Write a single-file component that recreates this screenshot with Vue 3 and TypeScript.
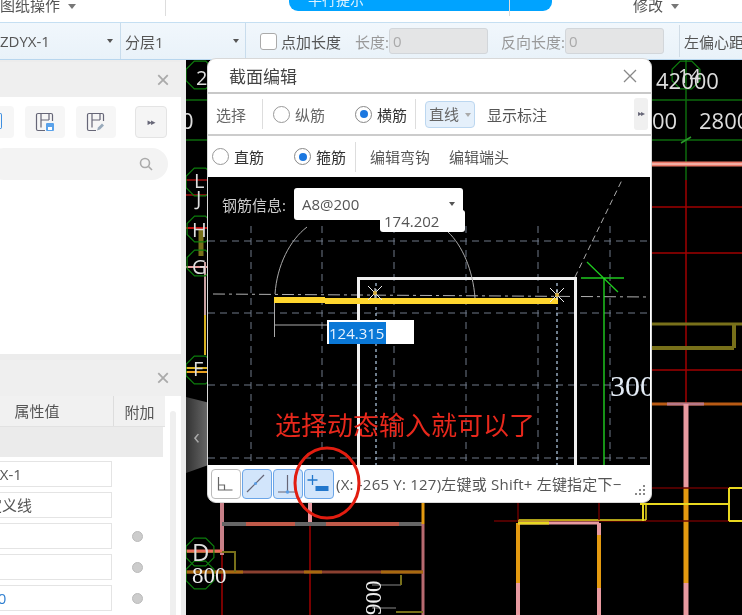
<template>
  <div class="app">
    <div class="menubar">
      <span class="menu-item first">图纸操作<i class="tri"></i></span>
      <span class="menu-sep"></span>
      <div class="notice">平行提示</div>
      <span class="menu-sep second"></span>
      <span class="menu-item last">修改<i class="tri"></i></span>
    </div>

    <div class="toolbar">
      <div class="combo combo-a">ZDYX-1<i class="tri small"></i></div>
      <div class="combo combo-b">分层1<i class="tri small"></i></div>
      <label class="check"><span class="box"></span>点加长度</label>
      <span class="lbl lbl-a">长度:</span>
      <div class="num">0</div>
      <span class="lbl lbl-b">反向长度:</span>
      <div class="num">0</div>
      <span class="tb-sep"></span>
      <span class="lbl lbl-c">左偏心距</span>
    </div>

    <div class="main">
      <aside class="side">
        <section class="panel panel-top">
          <div class="panel-head"><span class="close">×</span></div>
          <div class="icon-row">
            <div class="icon-btn cut">
              <span class="cut-mark"></span>
            </div>
            <div class="icon-btn">
              <svg width="20" height="20" viewBox="0 0 20 20">
                <path d="M10 18.500H3a1.500 1.500 0 0 1-1.500-1.500V3A1.500 1.500 0 0 1 3 1.500h13A1.500 1.500 0 0 1 17.500 3v6M6 1.500v14M6 8h8M14 1.500V8" fill="none" stroke="#667" stroke-width="1.200" />
                <rect x="11" y="11" width="8" height="8" rx="1" fill="#5aa2ea" />
                <rect x="13" y="15" width="4" height="3" fill="#fff" />
              </svg>
            </div>
            <div class="icon-btn">
              <svg width="20" height="20" viewBox="0 0 20 20">
                <path d="M10 18.500H3a1.500 1.500 0 0 1-1.500-1.500V3A1.500 1.500 0 0 1 3 1.500h13A1.500 1.500 0 0 1 17.500 3v6M6 1.500v14M6 8h8M14 1.500V8" fill="none" stroke="#667" stroke-width="1.200" />
                <path d="M11 18.500l1-3 4-4 2 2-4 4z" fill="#9ab" />
              </svg>
            </div>
            <div class="more-btn">▸▸</div>
          </div>
          <div class="search">
            <svg width="14" height="14" viewBox="0 0 14 14">
              <circle cx="6" cy="6" r="4.500" fill="none" stroke="#aaa" stroke-width="1.600" />
              <path d="M9.500 9.500L13 13" stroke="#aaa" stroke-width="1.600" />
            </svg>
          </div>
        </section>

        <section class="panel panel-bottom">
          <div class="panel-head"><span class="close">×</span></div>
          <div class="prop-wrap">
            <div class="prop-table">
              <div class="prop-header">
                <span class="col-val">属性值</span>
                <span class="col-add">附加</span>
              </div>
              <div class="prop-group"></div>
              <div v-for="(row, i) in propRows" :key="i" class="prop-row">
                <div class="prop-input" :class="{ blue: row.blue }">{{ row.text }}</div>
                <span v-if="row.dot" class="dot"></span>
              </div>
            </div>
            <div class="scroll-track"></div>
          </div>
        </section>
      </aside>

      <div class="canvas">
        <svg class="cad" width="556" height="555" viewBox="186 60 556 555">
          <line
            v-for="(l, i) in bgLines"
            :key="i"
            :x1="l[0]"
            :y1="l[1]"
            :x2="l[2]"
            :y2="l[3]"
            :stroke="l[4]"
            :stroke-width="l[5]"
          />
          <polygon v-for="(p, i) in bubbles" :key="'b' + i" :points="hex(p[0], p[1], p[2])" fill="none" stroke="#0d7d0d" stroke-width="1.200" />
          <text x="656" y="89" class="dim">42000</text>
          <text x="652" y="129" class="dim">00</text>
          <text x="699" y="129" class="dim">2800</text>
          <text x="678" y="83" class="axis">14</text>
          <text x="196" y="85" class="axis">2</text>
          <text x="181" y="129" class="dim">0</text>
          <text x="194" y="188" class="axis">L</text>
          <text x="196" y="205" class="axis">J</text>
          <text x="192" y="237" class="axis">H</text>
          <text x="192" y="274" class="axis">G</text>
          <text x="193" y="376" class="axis">F</text>
          <text x="192" y="561" class="axis big">D</text>
          <text x="192" y="583" class="num-serif">800</text>
          <text transform="translate(381 615) rotate(-90)" class="num-serif">900</text>
        </svg>
        <div class="collapse"><span>‹</span></div>
      </div>
    </div>

    <div class="dialog">
      <div class="dlg-title">
        <span>截面编辑</span>
        <svg width="16" height="16" viewBox="0 0 16 16"><path d="M2 2l12 12M14 2L2 14" stroke="#888" stroke-width="1.300" /></svg>
      </div>
      <div class="dlg-row row-a">
        <span class="t-select">选择</span>
        <span class="v-sep"></span>
        <span class="radio r1"></span><span class="r-text">纵筋</span>
        <span class="radio on r2"></span><span class="r-text strong">横筋</span>
        <span class="v-sep s2"></span>
        <div class="line-btn">直线<i class="tri tiny"></i></div>
        <span class="t-show">显示标注</span>
        <div class="dlg-more">▸▸</div>
      </div>
      <div class="dlg-row row-b">
        <span class="radio r3"></span><span class="r-text strong">直筋</span>
        <span class="radio on r4"></span><span class="r-text strong">箍筋</span>
        <span class="v-sep s3"></span>
        <span class="t-edit">编辑弯钩</span>
        <span class="t-edit e2">编辑端头</span>
      </div>
      <div class="dlg-canvas">
        <svg width="442" height="288" viewBox="208 177 442 288">
          <line v-for="y in gridY" :key="'y' + y" x1="208" :y1="y" x2="650" :y2="y" class="grid" />
          <line v-for="x in gridX" :key="'x' + x" :x1="x" y1="226" :x2="x" y2="465" class="grid" />
          <line x1="376" y1="277" x2="376" y2="465" class="axis-dot" />
          <line x1="557" y1="277" x2="557" y2="465" class="axis-dot" />
          <line x1="213" y1="294" x2="650" y2="297" class="center" />
          <path d="M358.500 465V278.500H575.500V465" fill="none" stroke="#f0f0f0" stroke-width="3" />
          <path d="M575 277L622 180" class="diag" />
          <path d="M275 294C277 265 290 240 307 227M448 232C462 245 473 270 475 298M274.500 300V337M274 325H328" fill="none" stroke="#aaa" stroke-width="1" />
          <path d="M274 297H325V298H558V304H325V303H274z" fill="#ffd62e" />
          <g v-for="s in stars" :key="s[0]" :transform="`translate(${s[0]} ${s[1]})`">
            <path d="M-7-7L7 7M7-7L-7 7M0-5V5" stroke="#eee" stroke-width="1" />
            <circle r="2" fill="#d8b040" />
          </g>
          <path d="M581 278H624M587 262L618 292" stroke="#1ec81e" stroke-width="1.300" />
          <path d="M604 278V465" stroke="#22e022" stroke-width="1.300" />
          <text x="610" y="396" class="big-300">300</text>
        </svg>
        <div class="steel">
          <span class="steel-label">钢筋信息:</span>
          <div class="steel-box">A8@200<i class="tri small"></i></div>
        </div>
        <div class="angle-tag">174.202</div>
        <div class="len-input"><span>124.315</span></div>
      </div>
      <div class="dlg-foot">
        <button class="tool plain">
          <svg width="24" height="24" viewBox="0 0 24 24"><path d="M4.500 5V18H18.500M4.500 13H10.500V18" fill="none" stroke="#666" stroke-width="1.200" /></svg>
        </button>
        <button class="tool active">
          <svg width="24" height="24" viewBox="0 0 24 24"><path d="M2 20L19 3" stroke="#667" stroke-width="1.200" /><circle cx="10.500" cy="11.500" r="1.500" fill="#5a9ee6" /></svg>
        </button>
        <button class="tool active">
          <svg width="24" height="24" viewBox="0 0 24 24"><path d="M11.500 3V20M2 20H19" stroke="#667" stroke-width="1.200" /><circle cx="11.500" cy="20" r="1.800" fill="#5a9ee6" /></svg>
        </button>
        <button class="tool active">
          <svg width="24" height="24" viewBox="0 0 24 24"><path d="M5.500 3V13M0.500 8H10.500" stroke="#2277cc" stroke-width="1.300" /><rect x="8.500" y="14" width="13" height="5" fill="#2277cc" /></svg>
        </button>
        <span class="status">(X: -265 Y: 127)左键或 Shift+ 左键指定下−</span>
        <svg class="grip" width="12" height="12" viewBox="0 0 12 12" fill="#888">
          <rect v-for="g in gripDots" :key="g.join()" :x="g[0]" :y="g[1]" width="2" height="2" />
        </svg>
      </div>
    </div>

    <div class="note">选择动态输入就可以了</div>
    <svg class="ring" width="70" height="76" viewBox="0 0 70 76">
      <ellipse cx="35" cy="38" rx="32" ry="35" fill="none" stroke="#e21d10" stroke-width="3" />
    </svg>
  </div>
</template>

<script setup lang="ts">
type Seg = [number, number, number, number, string, number]

const PINK = '#e89aa0'
const ORANGE = '#e49a10'
const RED = '#a00000'
const DARK = '#6a0000'
const YEL = '#e8d820'
const OLIVE = '#78701a'
const GREEN = '#0c6a0c'

const propRows = [
  { text: 'ZDYX-1', dot: false, blue: false },
  { text: '自定义线', dot: false, blue: false },
  { text: '', dot: true, blue: false },
  { text: '', dot: true, blue: false },
  { text: '3000', dot: true, blue: true },
]

const gridX = [251, 322, 394, 466, 538, 610]
const gridY = [241, 313, 385, 458]
const stars = [[375, 293], [557, 295]]
const gripDots = [[8, 0], [4, 4], [8, 4], [0, 8], [4, 8], [8, 8]]

const bubbles = [
  [200, 75, 15], [200, 182, 15], [200, 229, 14], [200, 263, 14], [200, 370, 15],
  [200, 552, 15], [200, 575, 15], [686, 75, 15],
]

const bgLines: Seg[] = [
  // upper right
  [186, 100, 742, 100, GREEN, 1.5],
  [186, 140, 742, 140, GREEN, 1.5],
  [686, 60, 686, 180, GREEN, 1.5],
  [681, 143, 691, 137, '#2a9a2a', 1.5],
  [652, 164, 742, 164, '#e87868', 5],
  [652, 164, 742, 164, '#f6c0b8', 1.5],
  [686, 180, 686, 404, RED, 1.5],
  [652, 207, 742, 207, RED, 1.5],
  [652, 253, 742, 253, RED, 1.5],
  [652, 370, 742, 370, RED, 1.5],
  [652, 324, 742, 324, OLIVE, 3],
  [652, 348, 734, 348, OLIVE, 4],
  [734, 348, 734, 324, OLIVE, 4],
  [652, 404, 742, 404, '#b85a14', 3],
  [667, 404, 704, 404, '#b87888', 3],
  [686, 404, 686, 488, PINK, 5],
  [686, 488, 686, 583, ORANGE, 5],
  [686, 583, 686, 615, PINK, 5],
  [652, 488, 742, 488, DARK, 1.5],
  [494, 521, 742, 521, DARK, 1.5],
  [640, 504, 730, 504, YEL, 2],
  [643, 504, 643, 521, YEL, 2],
  [729, 488, 729, 521, YEL, 2],
  [729, 488, 742, 488, YEL, 2],
  [729, 521, 742, 521, YEL, 2],
  // lower building
  [222, 502, 222, 555, '#c88088', 4],
  [222, 555, 222, 615, RED, 1.5],
  [310, 502, 310, 524, PINK, 4],
  [310, 524, 310, 615, RED, 1.5],
  [222, 524, 423, 524, '#666', 4],
  [246, 524, 295, 524, '#c05a4a', 4],
  [326, 524, 399, 524, '#c05a4a', 4],
  [423, 502, 423, 524, ORANGE, 3],
  [423, 524, 423, 615, '#b86a70', 3],
  [186, 572, 423, 572, '#8a4030', 3],
  [186, 572, 243, 572, '#a86a10', 3],
  [304, 572, 322, 572, '#a86a10', 3],
  [381, 572, 423, 572, '#a86a10', 3],
  [187, 552, 236, 552, OLIVE, 2],
  [235, 552, 235, 572, OLIVE, 2],
  [186, 551, 222, 551, '#e86a5a', 3],
  [372, 585, 401, 585, '#888', 1],
  [401, 585, 401, 575, OLIVE, 2],
  [372, 608, 396, 608, '#888', 1],
  [396, 612, 423, 612, OLIVE, 2],
  // right building
  [518, 523, 518, 583, ORANGE, 4],
  [518, 583, 518, 615, PINK, 4],
  [518, 523, 599, 523, PINK, 3],
  [518, 523, 549, 523, YEL, 3],
  [599, 523, 599, 535, PINK, 4],
  [599, 535, 599, 588, ORANGE, 4],
  [599, 588, 599, 615, PINK, 4],
  [518, 520, 646, 520, YEL, 1.5],
  [646, 504, 646, 520, YEL, 1.5],
  [518, 502, 518, 520, DARK, 1.5],
  [599, 502, 599, 520, DARK, 1.5],
  // left strip
  [186, 180, 207, 180, '#a01010', 1.5],
  [186, 195, 207, 195, '#a01010', 1.5],
  [186, 228, 207, 228, '#c01010', 2],
  [201, 230, 201, 256, OLIVE, 5],
  [186, 267, 207, 267, '#e8a0a0', 2],
  [205, 262, 205, 350, '#c8a0a0', 2],
  [205, 315, 205, 355, '#d8b020', 2],
  [186, 368, 207, 368, '#d8b020', 2],
  [186, 372, 207, 372, '#e8a020', 2],
]

function hex(cx: number, cy: number, r: number): string {
  const pts: string[] = []
  for (let i = 0; i < 8; i++) {
    const a = (Math.PI / 4) * i + Math.PI / 8
    pts.push(`${(cx + r * Math.cos(a)).toFixed(1)},${(cy + r * Math.sin(a)).toFixed(1)}`)
  }
  return pts.join(' ')
}
</script>

<style>
html, body { margin: 0; background: #fff; }
</style>

<style scoped>
.app {
  position: relative;
  width: 742px;
  height: 615px;
  overflow: hidden;
  background: #fff;
  color: #555;
  font-family: 'Open Sans', 'Noto Sans CJK SC', sans-serif;
  font-size: 15px;
  filter: blur(0.4px);
}
.tri {
  display: inline-block;
  width: 0;
  height: 0;
  border-left: 4px solid transparent;
  border-right: 4px solid transparent;
  border-top: 5px solid #777;
  vertical-align: middle;
  margin-left: 8px;
}
.tri.small { border-left-width: 3px; border-right-width: 3px; border-top-width: 4px; border-top-color: #555; margin-left: 0; }
.tri.tiny { border-left-width: 3px; border-right-width: 3px; border-top-width: 4px; border-top-color: #aaa; margin-left: 6px; }

/* top strip */
.menubar {
  height: 22px;
  display: flex;
  align-items: flex-start;
  overflow: hidden;
}
.menu-item { line-height: 14px; margin-top: -2px; white-space: nowrap; }
.menu-item.first { width: 165px; flex: none; }
.menu-item.last { margin-left: 123px; }
.menu-sep { width: 1px; height: 16px; background: #ddd; flex: none; }
.menu-sep.second { margin-left: -43px; }
.notice {
  margin-left: 123px;
  width: 263px;
  height: 11px;
  flex: none;
  box-sizing: border-box;
  padding-left: 19px;
  background: #00a3ff;
  border-radius: 0 0 9px 9px;
  color: #dff3ff;
  font-size: 14px;
  line-height: 0;
  overflow: hidden;
}

.toolbar {
  height: 38px;
  box-sizing: border-box;
  border-top: 1px solid #c5dff2;
  border-bottom: 1px solid #b8d6ee;
  background: linear-gradient(#f1f7fc, #e9f2f9);
  display: flex;
  align-items: center;
  white-space: nowrap;
  overflow: hidden;
}
.combo {
  height: 100%;
  box-sizing: border-box;
  flex: none;
  display: flex;
  align-items: center;
  justify-content: space-between;
  border-right: 1px solid #c8dcec;
}
.combo-a { width: 121px; padding-right: 7px; }
.combo-b { width: 125px; padding: 0 6px 0 4px; }
.check { display: flex; align-items: center; margin-left: 14px; width: 95px; flex: none; }
.box {
  width: 15px;
  height: 15px;
  border: 1px solid #aaa;
  border-radius: 3px;
  background: #fff;
  margin-right: 4px;
}
.lbl { color: #999; flex: none; }
.lbl-a { width: 34px; }
.lbl-b { width: 64px; margin-left: 13px; }
.lbl-c { color: #555; margin-left: 4px; }
.num {
  width: 99px;
  height: 26px;
  flex: none;
  box-sizing: border-box;
  border: 1px solid #d2d6da;
  border-radius: 3px;
  background: #e4e5e6;
  padding-left: 3px;
  line-height: 24px;
  color: #aaa;
}
.tb-sep { width: 1px; height: 32px; background: #d0dce6; margin-left: 15px; flex: none; }

/* main area */
.main { display: flex; height: 555px; }
.side {
  width: 186px;
  flex: none;
  background: #ececec;
  display: flex;
  flex-direction: column;
  gap: 6px;
  overflow: hidden;
}
.panel { width: 181px; background: #fff; overflow: hidden; position: relative; }
.panel-top { height: 292px; margin-top: 2px; flex: none; }
.panel-bottom { flex: 1; }
.panel-head {
  height: 36px;
  background: #efefef;
  display: flex;
  align-items: center;
  justify-content: flex-end;
  padding-right: 11px;
}
.panel-top .panel-head { height: 35px; }
.close { color: #aaa; font-size: 24px; line-height: 1; font-family: 'Liberation Sans', sans-serif; }
.icon-row { display: flex; align-items: center; margin: 9px 0 0 -26px; gap: 11px; }
.icon-btn {
  width: 40px;
  height: 32px;
  flex: none;
  border-radius: 4px;
  background: #f6f6f6;
  display: flex;
  align-items: center;
  justify-content: center;
}
.cut { position: relative; }
.cut-mark {
  position: absolute;
  left: 25px;
  top: 7px;
  width: 2px;
  height: 14px;
  border: 1px solid #3f8fe0;
  border-left: 0;
  border-radius: 0 2px 2px 0;
}
.more-btn {
  width: 30px;
  height: 30px;
  margin-left: 8px;
  flex: none;
  border: 1px solid #e4e4e4;
  border-radius: 4px;
  background: #f5f5f5;
  color: #667;
  font-size: 9px;
  letter-spacing: -1px;
  text-align: center;
  line-height: 30px;
  font-family: 'DejaVu Sans', sans-serif;
}
.search {
  height: 32px;
  width: 180px;
  margin: 10px 0 0 -12px;
  background: #f3f3f3;
  border-radius: 16px;
  display: flex;
  align-items: center;
  justify-content: flex-end;
  padding-right: 15px;
  box-sizing: border-box;
}
.prop-wrap { display: flex; height: 100%; }
.prop-table { width: 165px; flex: none; margin-right: 5px; }
.prop-header {
  height: 31px;
  display: flex;
  align-items: center;
  background: #f1f1f1;
  border-bottom: 1px solid #e2e2e2;
  box-sizing: border-box;
}
.col-val { width: 152px; margin-left: -39px; flex: none; text-align: center; border-right: 1px solid #ddd; line-height: 30px; }
.col-add { flex: 1; text-align: center; }
.prop-group { height: 30px; width: 163px; background: #ebebeb; margin-bottom: 4px; }
.prop-row { display: flex; align-items: center; height: 26px; margin-bottom: 5px; }
.prop-input {
  width: 146px;
  height: 26px;
  margin-left: -34px;
  box-sizing: border-box;
  border: 1px solid #e4e4e4;
  padding-left: 5px;
  line-height: 24px;
  flex: none;
}
.prop-input.blue { color: #2f7fd0; }
.dot { width: 11px; height: 11px; margin-left: 20px; border-radius: 50%; background: #ccc; border: 1px solid #bbb; box-sizing: border-box; }
.scroll-track { width: 6px; height: 100%; margin-top: 15px; background: #efefef; border-radius: 3px; }

.canvas { position: relative; flex: 1; background: #000; overflow: hidden; }
.cad { display: block; }
.dim { fill: #ddd; font: 22px 'Open Sans', sans-serif; }
.axis { fill: #ddd; font: 20px 'Open Sans', sans-serif; }
.axis.big { font-size: 24px; }
.num-serif { fill: #eee; font: 23px 'Liberation Serif', serif; }
.collapse {
  position: absolute;
  left: 0;
  top: 337px;
  width: 21px;
  height: 76px;
  background: linear-gradient(90deg, #333, #666);
  clip-path: polygon(0 0, 100% 7%, 100% 90%, 0 100%);
  color: #aaa;
  font-size: 22px;
  display: flex;
  align-items: center;
  justify-content: center;
}

/* floating dialog */
.dialog {
  position: absolute;
  left: 207px;
  top: 58px;
  width: 445px;
  height: 445px;
  box-sizing: border-box;
  background: #fff;
  border-radius: 9px;
  border: 1px solid #d8d8d8;
  overflow: hidden;
  display: flex;
  flex-direction: column;
}
.dlg-title {
  height: 33px;
  flex: none;
  display: flex;
  align-items: center;
  justify-content: space-between;
  padding: 0 13px 0 21px;
  font-size: 17px;
  color: #444;
  border-bottom: 2px solid #c8c8c8;
}
.dlg-row {
  height: 40px;
  flex: none;
  display: flex;
  align-items: center;
  position: relative;
  border-bottom: 2px solid #ccc;
  white-space: nowrap;
}
.row-b { border-bottom: 0; height: 41px; }
.t-select { margin-left: 8px; width: 46px; color: #666; }
.v-sep { width: 1px; height: 30px; background: #ddd; }
.radio {
  width: 17px;
  height: 17px;
  box-sizing: border-box;
  border: 1px solid #999;
  border-radius: 50%;
  background: #fff;
  position: relative;
  flex: none;
}
.radio.on { border-color: #888; }
.radio.on::after {
  content: '';
  position: absolute;
  inset: 3.5px;
  border-radius: 50%;
  background: #1c78e0;
}
.r1 { margin-left: 10px; }
.r2 { margin-left: 30px; }
.r3 { margin-left: 4px; }
.r4 { margin-left: 30px; }
.r-text { margin-left: 5px; color: #666; }
.r-text.strong { color: #333; }
.s2 { margin-left: 8px; }
.s3 { margin-left: 9px; }
.line-btn {
  margin-left: 9px;
  width: 50px;
  height: 27px;
  box-sizing: border-box;
  background: #e5f0fb;
  border: 1px solid #bcd7f0;
  border-radius: 4px;
  padding-left: 3px;
  line-height: 25px;
  font-size: 15px;
  color: #666;
}
.t-show { margin-left: 12px; }
.dlg-more {
  margin-left: 87px;
  width: 14px;
  height: 32px;
  background: #f0f0f0;
  border-radius: 3px;
  color: #667;
  font-size: 8px;
  letter-spacing: -1px;
  line-height: 32px;
  text-align: center;
  font-family: 'DejaVu Sans', sans-serif;
}
.t-edit { margin-left: 14px; }
.e2 { margin-left: 19px; }
.dlg-canvas {
  position: relative;
  height: 288px;
  flex: none;
  background: #000;
  overflow: hidden;
  margin: 0 1px 0 0;
}
.dlg-canvas svg { display: block; }
.grid { stroke: #6f7888; stroke-width: 1; stroke-dasharray: 7 5; }
.axis-dot { stroke: #b8d0ea; stroke-width: 1.200; stroke-dasharray: 3 3; }
.center { stroke: #b0b0b0; stroke-width: 1; stroke-dasharray: 12 4 3 4; }
.diag { stroke: #aaa; stroke-width: 1; stroke-dasharray: 6 4; fill: none; }
.big-300 { fill: #e4ecf6; font: 30px 'Liberation Serif', serif; }
.steel {
  position: absolute;
  left: 14px;
  top: 11px;
  display: flex;
  align-items: center;
}
.steel-label { width: 72px; color: #ccc; white-space: nowrap; }
.steel-box {
  width: 169px;
  height: 32px;
  box-sizing: border-box;
  background: #fff;
  border-radius: 3px;
  padding: 0 8px;
  display: flex;
  align-items: center;
  justify-content: space-between;
  color: #555;
}
.angle-tag {
  position: absolute;
  left: 172px;
  top: 33px;
  width: 85px;
  height: 22px;
  background: #fff;
  border-radius: 3px;
  line-height: 22px;
  padding-left: 4px;
  box-sizing: border-box;
}
.len-input {
  position: absolute;
  left: 119px;
  top: 143px;
  width: 87px;
  height: 24px;
  background: #fff;
  padding: 2px 0 0 2px;
  box-sizing: border-box;
}
.len-input span {
  display: block;
  width: 57px;
  height: 22px;
  background: #0a78d7;
  color: #e8f3ff;
  line-height: 22px;
}
.dlg-foot {
  flex: 1;
  display: flex;
  align-items: center;
  padding-left: 3px;
  position: relative;
  white-space: nowrap;
  gap: 1px;
}
.tool {
  width: 30px;
  height: 30px;
  padding: 2px;
  box-sizing: border-box;
  border-radius: 4px;
  display: flex;
  align-items: center;
  justify-content: center;
  background: #fff;
  flex: none;
}
.tool.plain { border: 1px solid #bbb; }
.tool.active { background: #d2e5fb; border: 1px solid #6aa5e8; }
.status { margin-left: 1px; color: #555; letter-spacing: 0.22px; }
.grip { position: absolute; right: 4px; bottom: 5px; }

/* red markup over the screenshot */
.note {
  position: absolute;
  left: 275px;
  top: 407px;
  color: #e8281c;
  font-size: 26px;
  line-height: 36px;
  white-space: nowrap;
}
.ring { position: absolute; left: 292px; top: 445px; }
</style>
